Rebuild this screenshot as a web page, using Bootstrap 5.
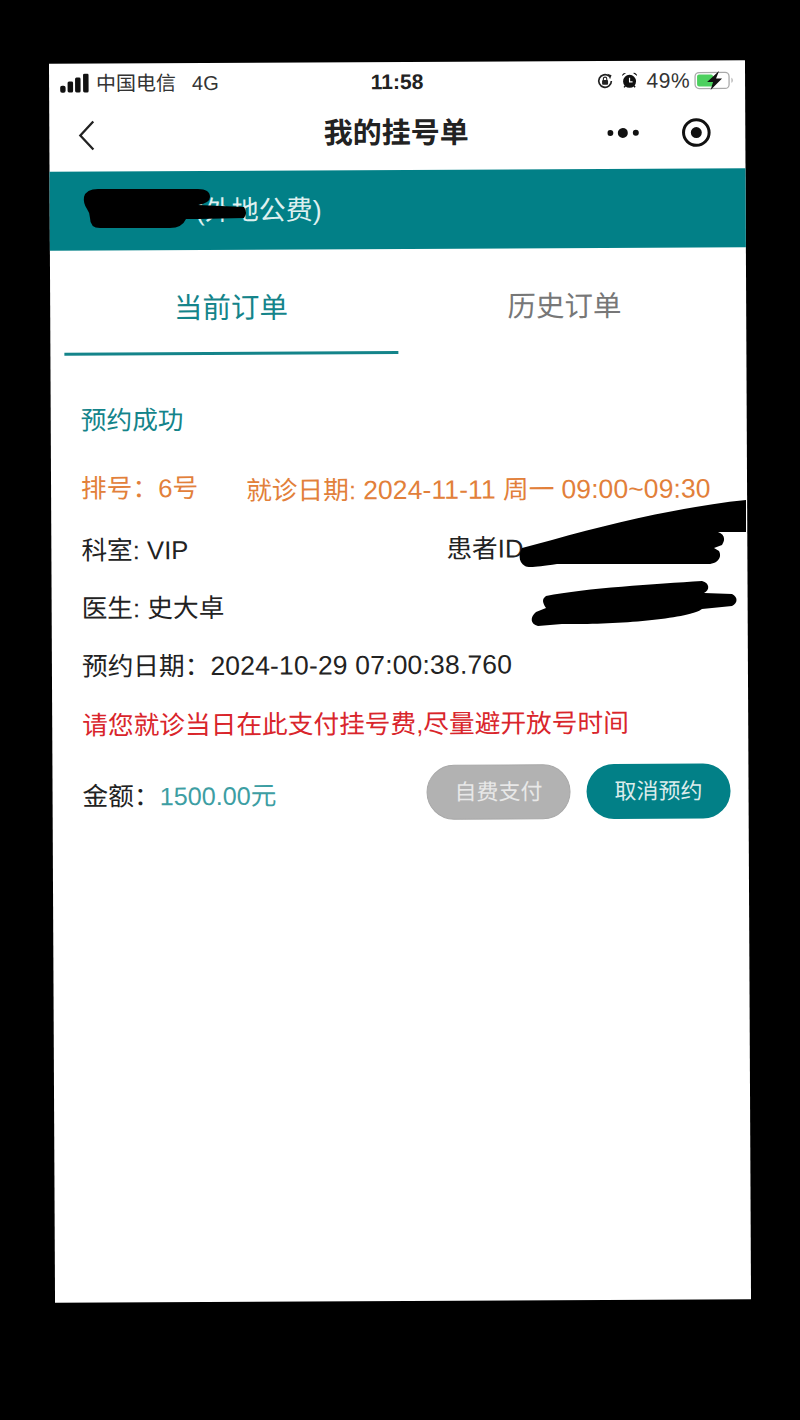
<!DOCTYPE html>
<html lang="zh-CN">
<head>
    <meta charset="UTF-8">
    <meta name="viewport" content="width=device-width, initial-scale=1.0">
    <title>我的挂号单</title>
    <link href="https://cdn.jsdelivr.net/npm/bootstrap@5.3.3/dist/css/bootstrap.min.css" rel="stylesheet">
    <style>
        html, body { height: 100%; }
        body {
            background: #000;
            padding: 62px 52px 0;
            font-family: "Liberation Sans", "Noto Sans CJK SC", sans-serif;
            color: #222;
            overflow: hidden;
            position: relative;
        }
        .phone-screen {
            width: 696px;
            height: 1239px;
            background: #fff;
            transform: rotate(-0.28deg);
        }
        .status-bar { height: 39px; padding: 0 11px; font-size: 20px; color: #333; }
        .status-side { width: 280px; }
        .status-time { font-size: 21px; font-weight: 700; color: #222; }
        .status-pct { font-size: 21px; letter-spacing: .5px; }
        .signal-icon { margin-right: 6px; }
        .nav-bar { height: 69px; padding: 0 34px 4px 28px; }
        .nav-title { font-size: 29px; font-weight: 700; color: #222; margin-left: 4px; }
        .nav-side { width: 104px; }
        .nav-left { width: 104px; }
        .patient-band { height: 79px; background: #028087; color: #dff0f0; font-size: 27px; padding: 2px 0 0 146px; }
        .order-tabs { height: 105px; padding: 0 15px 0 14px; }
        .order-tab { width: 334px; font-size: 28.5px; color: #777; padding-top: 37px; }
        .order-tab-active { color: #14848a; border-bottom: 3px solid #14848a; }
        .order-body { padding: 46px 18px 0 30px; font-size: 25.7px; }
        .order-state { color: #14848a; padding-bottom: 29px; }
        .order-row { height: 58px; }
        .order-row-tall { height: 59px; }
        .order-orange { color: #e2803a; height: 62px; }
        .order-orange .gap-date { margin-left: 48px; padding-top: 3px; }
        .order-orange .num-run { letter-spacing: .1px; }
        .order-red { color: #d9252b; height: 60px; }
        .half-cell { width: 365px; }
        .num-run { font-size: 26.5px; letter-spacing: .18px; }
        .amount-val { color: #3d9ea3; }
        .amount-num { font-size: 25.2px; }
        .amount-label { padding-top: 6px; }
        .pill-btn {
            width: 144px;
            height: 55px;
            border-radius: 28px;
            border: 0;
            color: #dcecec;
            font-size: 22px;
            padding: 0;
        }
        .pill-gray { background: #b2b2b2; margin-right: 16px; border: 1px solid #a8a8a8; color: #e8e8e8; }
        .pill-teal { background: #028087; }
        .ink-layer { position: absolute; left: 0; top: 0; }
    </style>
</head>
<body>
    <div class="phone-screen">
        <!-- 状态栏 -->
        <div class="status-bar d-flex align-items-center justify-content-between">
            <div class="status-side d-flex align-items-center">
                <svg width="30" height="20" viewBox="0 0 30 20" class="signal-icon">
                    <rect x="0" y="12" width="5.500" height="7" rx="2" fill="#111"/>
                    <rect x="7.500" y="8" width="5.500" height="11" rx="1.500" fill="#111"/>
                    <rect x="15" y="4" width="5.500" height="15" rx="1.500" fill="#111"/>
                    <rect x="23" y="0" width="5.500" height="19" rx="1.500" fill="#111"/>
                </svg>
                <span>中国电信</span><span class="ms-3">4G</span>
            </div>
            <div class="status-time">11:58</div>
            <div class="status-side d-flex align-items-center justify-content-end">
                <svg width="16" height="16" viewBox="0 0 16 16" class="me-2">
                    <path d="M14.300 8A6.300 6.300 0 1 1 12 3.100" fill="none" stroke="#222" stroke-width="1.700"/>
                    <path d="M10.500 .8l4 1.500-1.500 4z" fill="#222"/>
                    <rect x="5" y="7" width="6" height="4.800" rx="1" fill="#222"/>
                    <path d="M6.300 7V5.800a1.700 1.700 0 0 1 3.400 0V7" fill="none" stroke="#222" stroke-width="1.100"/>
                </svg>
                <svg width="17" height="17" viewBox="0 0 17 17" class="me-2">
                    <circle cx="8.500" cy="9.500" r="6.500" fill="#111"/>
                    <path d="M1 4.200a3 3 0 0 1 4-3zM16 4.200a3 3 0 0 0-4-3z" fill="#111"/>
                    <path d="M3 15.500l1.600-2M14 15.500l-1.600-2" stroke="#111" stroke-width="1.500"/>
                    <path d="M8.500 6v4h3" fill="none" stroke="#fff" stroke-width="1.200"/>
                </svg>
                <span class="status-pct">49%</span>
                <svg width="40" height="22" viewBox="0 0 40 22" class="ms-1">
                    <rect x="1" y="3" width="34" height="16" rx="4" fill="none" stroke="#aaa" stroke-width="1.300"/>
                    <rect x="3" y="5" width="16" height="12" rx="2" fill="#4cd05e"/>
                    <path d="M37.500 8.500c1.400.6 1.400 4.400 0 5z" fill="#999"/>
                    <path d="M25 1.500 13 12.500h6l-2.500 8 11.500-11.500h-6z" fill="#111"/>
                </svg>
            </div>
        </div>

        <!-- 标题栏 -->
        <div class="nav-bar d-flex align-items-center justify-content-between">
            <div class="nav-left">
                <svg width="18" height="32" viewBox="0 0 18 32">
                    <path d="M16 2 3 16l13 14" fill="none" stroke="#222" stroke-width="2.300"/>
                </svg>
            </div>
            <div class="nav-title">我的挂号单</div>
            <div class="nav-side d-flex align-items-center justify-content-between">
                <svg width="32" height="12" viewBox="0 0 32 12">
                    <circle cx="3" cy="6" r="3" fill="#111"/>
                    <circle cx="15.500" cy="6" r="5" fill="#111"/>
                    <circle cx="28.500" cy="6" r="3" fill="#111"/>
                </svg>
                <svg width="30" height="30" viewBox="0 0 30 30">
                    <circle cx="15" cy="15" r="12.800" fill="none" stroke="#111" stroke-width="3"/>
                    <circle cx="15" cy="15" r="5.500" fill="#111"/>
                </svg>
            </div>
        </div>

        <div class="patient-band d-flex align-items-center">(外地公费)</div>

        <!-- 订单切换 -->
        <div class="order-tabs d-flex">
            <div class="order-tab order-tab-active text-center">当前订单</div>
            <div class="order-tab text-center">历史订单</div>
        </div>

        <div class="order-body">
            <div class="order-state">预约成功</div>
            <div class="order-orange d-flex">
                <span>排号：6号</span>
                <span class="gap-date">就诊日期: <span class="num-run">2024-11-11</span> 周一 <span class="num-run">09:00~09:30</span></span>
            </div>
            <div class="order-row d-flex align-items-start">
                <div class="half-cell">科室: VIP</div>
                <div>患者ID</div>
            </div>
            <div class="order-row">医生: 史大卓</div>
            <div class="order-row order-row-tall">预约日期：<span class="num-run">2024-10-29 07:00:38.760</span></div>
            <div class="order-red">请您就诊当日在此支付挂号费,尽量避开放号时间</div>
            <div class="d-flex align-items-center justify-content-between">
                <div class="amount-label">金额：<span class="amount-val"><span class="amount-num">1500.00</span>元</span></div>
                <div class="d-flex">
                    <button type="button" class="btn pill-btn pill-gray">自费支付</button>
                    <button type="button" class="btn pill-btn pill-teal">取消预约</button>
                </div>
            </div>
        </div>
    </div>

    <!-- 涂黑的个人信息 -->
    <svg class="ink-layer" width="800" height="1420" viewBox="0 0 800 1420">
        <path d="M84 197q2-8 14-8h100q12 0 12 8 0 6-12 8l46 2q4 6 0 11l-46 1-12 0q-4 9-16 9H100q-10 0-10-10 0-5-3-9-4-6-3-12z" fill="#000"/>
        <path d="M746 500c-60 6-130 22-194 40l-30 8c-4 8-3 14 3 18 3 2 12 1 32-2h150c12 0 15-8 12-13l-5-3 8-3c4-6 2-11-4-13h28z" fill="#000"/>
        <path d="M546 596c40-8 110-12 156-15 8 2 8 9 2 12l28 1c6 3 6 9 0 12l-30 3c-12 10-90 16-140 15l-24 2c-8-2-8-9-2-14l10-4c-4-6-4-9 0-12z" fill="#000"/>
    </svg>

    <script src="https://cdn.jsdelivr.net/npm/bootstrap@5.3.3/dist/js/bootstrap.bundle.min.js"></script>
</body>
</html>
